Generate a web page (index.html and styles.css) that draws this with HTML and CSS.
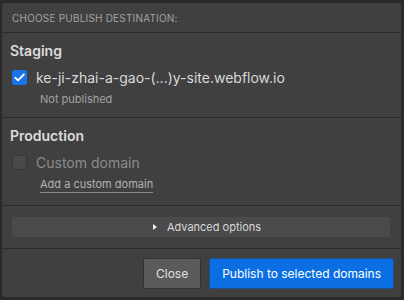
FILE: index.html
```html
<!DOCTYPE html>
<html lang="en">
<head>
  <meta charset="UTF-8">
  <meta name="viewport" content="width=device-width, initial-scale=1.0">
  <title>Publish</title>
  <link rel="stylesheet" href="styles.css">
</head>
<body>
  <div class="dialog">
    <div class="dialog-title">Choose publish destination:</div>

    <!-- Staging -->
    <div class="section">
      <h3>Staging</h3>
      <label class="option">
        <span class="check checked">
          <svg width="11" height="9" viewBox="0 0 11 9"><path d="M1.2 4.6 L4 7.3 L9.8 1.5" fill="none" stroke="#fff" stroke-width="1.8" stroke-linecap="round" stroke-linejoin="round"/></svg>
        </span>
        <span class="domain">ke-ji-zhai-a-gao-(...)y-site.webflow.io</span>
      </label>
      <p class="note">Not published</p>
    </div>

    <!-- Production -->
    <div class="section">
      <h3>Production</h3>
      <label class="option">
        <span class="check"></span>
        <span class="domain muted">Custom domain</span>
      </label>
      <p class="note"><a href="#">Add a custom domain</a></p>
    </div>

    <div class="advanced-wrap">
      <div class="advanced"><span class="tri"></span>Advanced options</div>
    </div>

    <div class="footer">
      <button class="btn">Close</button>
      <button class="btn primary">Publish to selected domains</button>
    </div>
  </div>
</body>
</html>
```

FILE: styles.css
```css
* { box-sizing: border-box; }
body {
  margin: 0;
  background: #2a2a2a;
  font-family: Inter, "Noto Sans", sans-serif;
  color: #d9d9d9;
}

.dialog {
  margin: 3px 3px 3px 2px;
  width: 399px;
  height: 294px;
  background: #404040;
  border-radius: 4px;
  display: flex;
  flex-direction: column;
  overflow: hidden;
}

.dialog-title {
  height: 30px;
  padding: 9px 0 0 10px;
  font-size: 10px;
  letter-spacing: 0.2px;
  text-transform: uppercase;
  color: #a3a3a3;
  border-bottom: 1px solid #2b2b2b;
}

.section {
  padding: 9px 8px 0;
  border-bottom: 1px solid #2b2b2b;
}
.section:nth-of-type(2) { height: 85px; }
.section:nth-of-type(3) { height: 88px; }

h3 {
  margin: 0;
  font-size: 14px;
  font-weight: 600;
  line-height: 18px;
  color: #dcdcdc;
}

.option {
  display: flex;
  align-items: center;
  gap: 9px;
  margin: 10px 0 0 2px;
  height: 15px;
}

.check {
  flex: none;
  width: 15px;
  height: 15px;
  border-radius: 2px;
  background: #494949;
  border: 1px solid #383838;
  display: flex;
  align-items: center;
  justify-content: center;
}
.check.checked {
  background: #1a73e8;
  border-color: #1a73e8;
}

.domain {
  font-size: 14px;
  color: #d9d9d9;
}
.domain.muted { color: #8c8c8c; }

.note {
  margin: 7px 0 0 30px;
  font-size: 11px;
  color: #a3a3a3;
}
.note a {
  color: #b3b3b3;
  text-decoration: none;
  border-bottom: 1px solid #8a8a8a;
  padding-bottom: 1px;
}

.advanced-wrap {
  padding: 11px 11px 11px 10px;
  border-bottom: 1px solid #2b2b2b;
}
.advanced {
  height: 20px;
  padding-left: 12px;
  background: #4a4a4a;
  border-radius: 2px;
  display: flex;
  align-items: center;
  justify-content: center;
  font-size: 11px;
  color: #d9d9d9;
}
.tri {
  width: 0;
  height: 0;
  border-left: 4px solid #eee;
  border-top: 3.5px solid transparent;
  border-bottom: 3.5px solid transparent;
  margin-right: 10px;
}

.footer {
  flex: 1;
  display: flex;
  justify-content: flex-end;
  align-items: flex-start;
  gap: 8px;
  padding: 9px 7px 0;
}

.btn {
  height: 31px;
  padding: 0 12px;
  font-family: inherit;
  font-size: 12px;
  color: #e0e0e0;
  background: #5a5a5a;
  border: 1px solid #333;
  border-radius: 2px;
}
.btn.primary {
  background: #0b6fe3;
  border-color: #1d4f8f;
  color: #fff;
}
```
